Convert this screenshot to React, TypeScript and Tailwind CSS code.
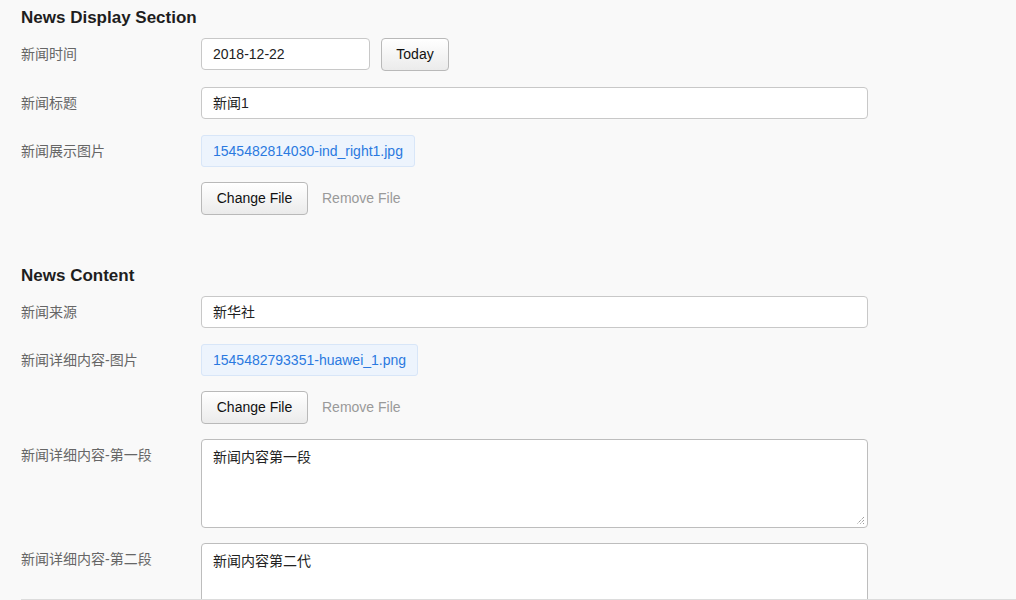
import React from 'react';

const font = { fontFamily: '"Liberation Sans", "Noto Sans CJK SC", sans-serif' };

const Row: React.FC<{ label?: string; children: React.ReactNode; className?: string }> = ({
    label,
    children,
    className = '',
}) => (
    <div className={`flex items-start ${className}`}>
        <div className="w-[180px] h-[32px] shrink-0 leading-[32px] text-[14px] text-[#666]">{label}</div>
        <div className="flex items-start flex-1">{children}</div>
    </div>
);

const TextInput: React.FC<{ value: string; className?: string }> = ({ value, className = '' }) => (
    <div
        className={`h-[32px] flex items-center px-[11px] bg-white border border-[#c8c8c8] rounded-[4px] text-[14px] text-[#222] ${className}`}
    >
        {value}
    </div>
);

const Button: React.FC<{ children: React.ReactNode; className?: string }> = ({ children, className = '' }) => (
    <button
        className={`h-[33px] px-[14px] rounded-[4px] border border-[#b9b9b9] bg-gradient-to-b from-white to-[#ebebeb] text-[14px] text-[#111] ${className}`}
    >
        {children}
    </button>
);

const FileChip: React.FC<{ name: string }> = ({ name }) => (
    <div className="h-[32px] flex items-center px-[11px] rounded-[3px] bg-[#edf4fd] border border-[#d8e6f8] text-[14px] text-[#2a79e0]">
        {name}
    </div>
);

const FileField: React.FC<{ label: string; name: string }> = ({ label, name }) => (
    <>
        <Row label={label}>
            <FileChip name={name} />
        </Row>
        <Row className="mt-[15px]">
            <Button className="w-[107px] px-0">Change File</Button>
            <span className="ml-[14px] leading-[33px] text-[14px] text-[#9a9a9a]">Remove File</span>
        </Row>
    </>
);

const TextArea: React.FC<{ value: string; className?: string }> = ({ value, className = '' }) => (
    <div
        className={`relative w-[667px] px-[11px] pt-[7px] bg-white border border-[#bdbdbd] rounded-[4px] text-[14px] text-[#222] ${className}`}
    >
        {value}
        <svg className="absolute right-[2px] bottom-[2px]" width="9" height="9" viewBox="0 0 9 9">
            <path d="M8 1L1 8M8 4L4 8M8 7L7 8" stroke="#777" strokeWidth="1" strokeDasharray="1 1" />
        </svg>
    </div>
);

export default function App() {
    return (
        <div className="bg-[#f9f9f9] w-[1016px] h-[600px] pl-[21px]" style={font}>
            <div className="h-[600px] overflow-hidden border-b border-[#dcdcdc]">
                <h2 className="pt-[6px] leading-[24px] text-[17px] font-bold text-[#1e1e1e] mb-[8px]">
                    News Display Section
                </h2>
                <Row label="新闻时间" className="mb-4">
                    <TextInput value="2018-12-22" className="w-[169px]" />
                    <Button className="ml-[11px] w-[68px] h-[32px] px-0">Today</Button>
                </Row>
                <Row label="新闻标题" className="mb-4">
                    <TextInput value="新闻1" className="w-[667px]" />
                </Row>
                <FileField label="新闻展示图片" name="1545482814030-ind_right1.jpg" />

                <h2 className="mt-[49px] leading-[24px] text-[17px] font-bold text-[#1e1e1e] mb-[8px]">
                    News Content
                </h2>
                <Row label="新闻来源" className="mb-4">
                    <TextInput value="新华社" className="w-[667px]" />
                </Row>
                <FileField label="新闻详细内容-图片" name="1545482793351-huawei_1.png" />
                <Row label="新闻详细内容-第一段" className="mt-[15px]">
                    <TextArea value="新闻内容第一段" className="h-[89px]" />
                </Row>
                <Row label="新闻详细内容-第二段" className="mt-[15px]">
                    <TextArea value="新闻内容第二代" className="h-[90px]" />
                </Row>
            </div>
        </div>
    );
}
